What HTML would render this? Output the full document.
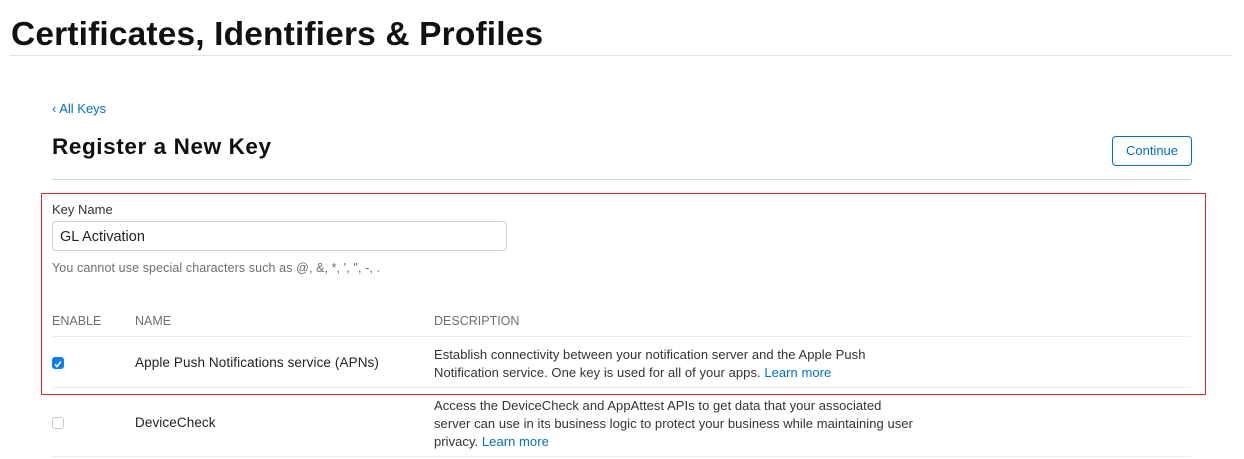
<!DOCTYPE html><html><head><style>
body{margin:0;width:1244px;height:459px;background:#fff;font-family:"Liberation Sans",sans-serif;color:#1d1d1f;position:relative;overflow:hidden}
.a{position:absolute;white-space:nowrap}
.l{position:absolute;height:1px;background:#e2e2e2}
.b{color:#0070c9}
.g{color:#6e6e73}
.d{font-size:13px;line-height:18px;color:#333;letter-spacing:0.05px}
</style></head><body>
<div class="a" style="left:11px;top:16px;font-size:33.5px;font-weight:bold;letter-spacing:0.15px;color:#111">Certificates, Identifiers &amp; Profiles</div>
<div class="l" style="left:10px;top:55px;width:1222px"></div>
<div class="a b" style="left:52px;top:101px;font-size:13px">‹ All Keys</div>
<div class="a" style="left:52px;top:134px;font-size:22.5px;font-weight:bold;letter-spacing:0.6px;color:#111">Register a New Key</div>
<div class="a b" style="left:1112px;top:136px;width:78px;height:28px;border:1px solid #0070c9;border-radius:4px;font-size:13px;line-height:28px;text-align:center">Continue</div>
<div class="l" style="left:52px;top:179px;width:1139px;background:#d6d6d6"></div>
<div class="a" style="left:41px;top:193px;width:1163px;height:200px;border:1px solid #e8232a"></div>
<div class="a" style="left:52px;top:202px;font-size:13px;color:#333">Key Name</div>
<div class="a" style="left:52px;top:221px;border:1px solid #d2d2d2;border-radius:4px;font-size:14.5px;line-height:30px;padding-left:7px;box-sizing:border-box;width:455px;height:30px;color:#222">GL Activation</div>
<div class="a g" style="left:52px;top:261px;font-size:12.5px;letter-spacing:0.1px">You cannot use special characters such as @, &amp;, *, ', ", -, .</div>
<div class="a g" style="left:52px;top:314px;font-size:12.5px">ENABLE</div>
<div class="a g" style="left:135px;top:314px;font-size:12.5px">NAME</div>
<div class="a g" style="left:434px;top:314px;font-size:12.5px">DESCRIPTION</div>
<div class="l" style="left:52px;top:336px;width:1139px;background:#ececec"></div>
<div class="a" style="left:52px;top:357px;width:12px;height:12px;background:#0a7cff;border-radius:3px"><svg width="12" height="12"><path d="M3 6.3l2 2.2 4-5" stroke="#fff" stroke-width="1.6" fill="none"/></svg></div>
<div class="a" style="left:135px;top:355px;font-size:13.5px;letter-spacing:0.1px;color:#222">Apple Push Notifications service (APNs)</div>
<div class="a d" style="left:434px;top:346px">Establish connectivity between your notification server and the Apple Push<br>Notification service. One key is used for all of your apps. <span class="b">Learn more</span></div>
<div class="l" style="left:52px;top:387px;width:1139px;background:#ececec"></div>
<div class="a" style="left:52px;top:417px;width:10px;height:10px;border:1px solid #c8c8c8;border-radius:3px"></div>
<div class="a" style="left:135px;top:415px;font-size:13.5px;letter-spacing:0.1px;color:#222">DeviceCheck</div>
<div class="a d" style="left:434px;top:397px">Access the DeviceCheck and AppAttest APIs to get data that your associated<br>server can use in its business logic to protect your business while maintaining user<br>privacy. <span class="b">Learn more</span></div>
<div class="l" style="left:52px;top:456px;width:1139px;background:#ececec"></div>
</body></html>
